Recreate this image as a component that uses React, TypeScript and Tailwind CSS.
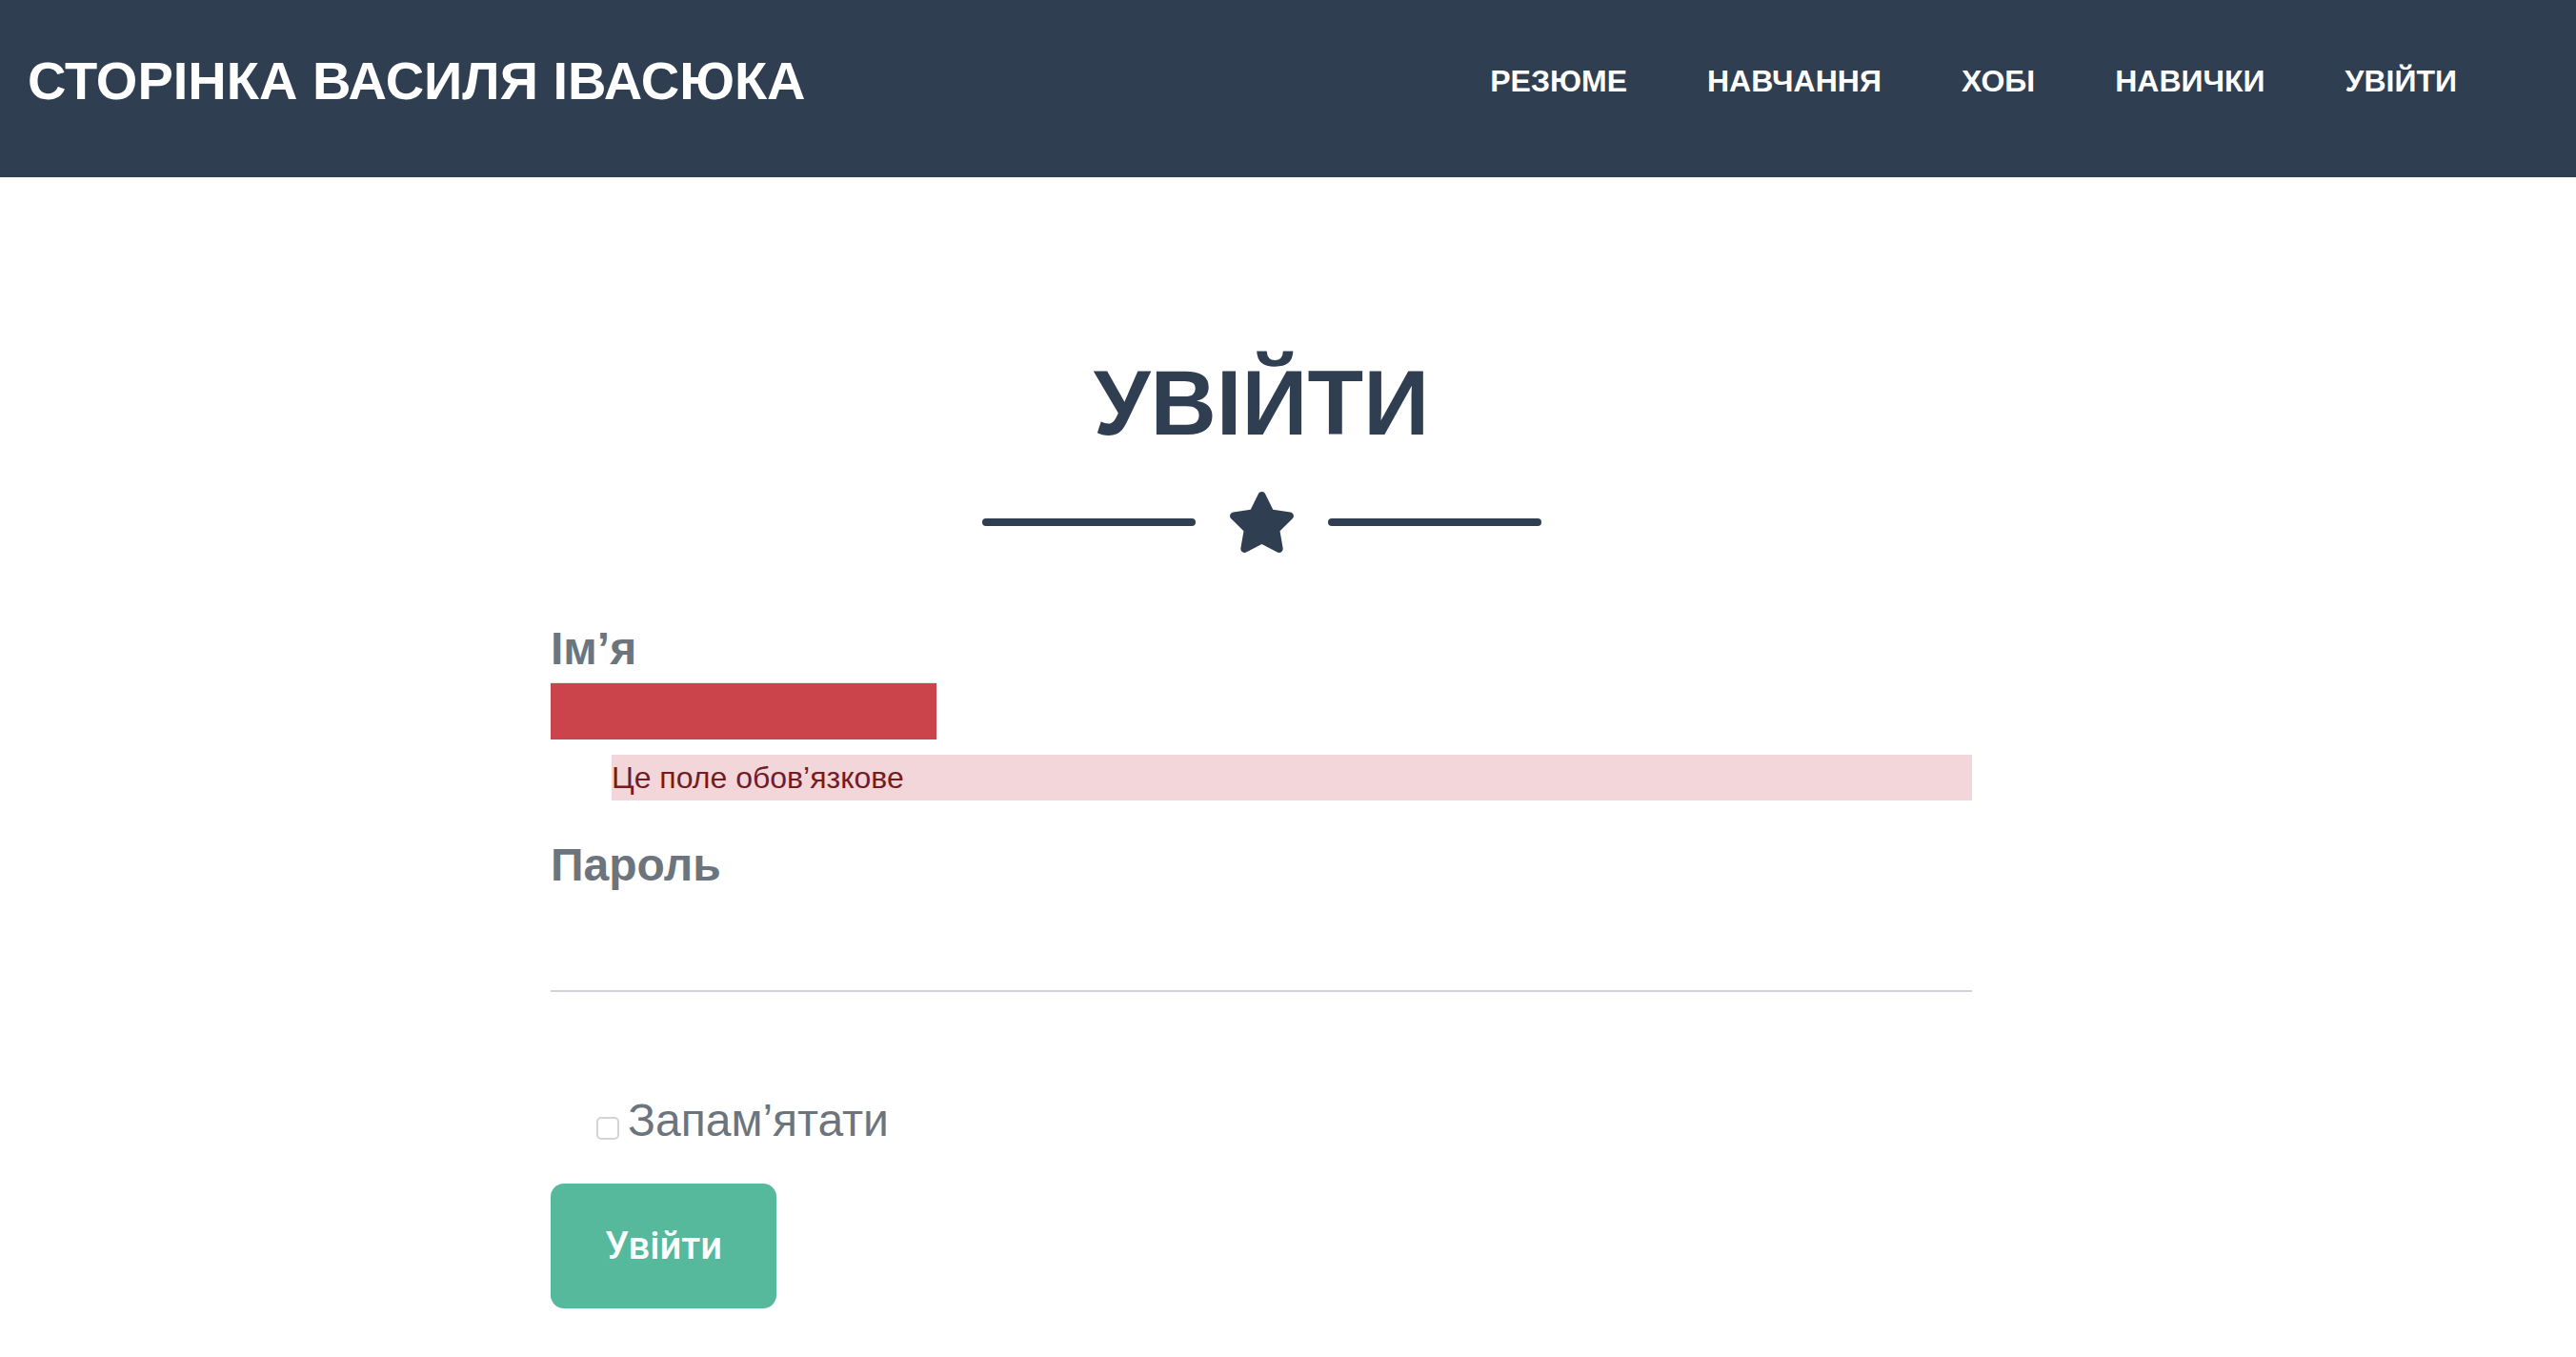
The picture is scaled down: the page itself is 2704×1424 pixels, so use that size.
import { useState } from 'react';

const navLinks = ['Резюме', 'Навчання', 'Хобі', 'Навички', 'Увійти'];

function Star() {
  return (
    <svg viewBox="20 0 536 512" className="h-[64px] w-[67px]" fill="#2f3e50">
      <path d="M259.3 17.8L194 150.2 47.9 171.5c-26.2 3.8-36.7 36.1-17.7 54.6l105.7 103-25 145.5c-4.5 26.3 23.2 46 46.4 33.7L288 439.6l130.7 68.7c23.2 12.2 50.9-7.4 46.4-33.7l-25-145.5 105.7-103c19-18.5 8.5-50.8-17.7-54.6L382 150.2 316.7 17.8c-11.7-23.6-45.6-23.9-57.4 0z" />
    </svg>
  );
}

export default function App() {
  const [name, setName] = useState('');
  const [password, setPassword] = useState('');
  const [remember, setRemember] = useState(false);

  return (
    <div className="min-h-screen bg-white font-['Liberation_Sans',Arial,sans-serif]">
      {/* navbar */}
      <header className="flex h-[186px] items-center justify-between bg-[#2f3e50] pb-[16px] pl-[29px] pr-[83px]">
        <a href="#" className="text-[56px] font-bold uppercase leading-[84px] text-white">
          Сторінка Василя Івасюка
        </a>
        <nav className="flex">
          {navLinks.map((link) => (
            <a key={link} href="#" className="px-[42px] text-[32px] font-bold uppercase leading-[48px] text-white">
              {link}
            </a>
          ))}
        </nav>
      </header>

      <main className="flex justify-center pr-[56px] pt-[179px] pb-[60px]">
        <div className="w-[1492px]">
          <h2 className="text-center text-[96px] font-bold uppercase leading-[116px] text-[#2f3e50]">
            Увійти
          </h2>

          <div className="mt-[35px] flex items-center justify-center gap-[36px]">
            <div className="h-[8px] w-[224px] rounded-full bg-[#2f3e50]" />
            <Star />
            <div className="h-[8px] w-[224px] rounded-full bg-[#2f3e50]" />
          </div>

          <form className="mt-[72px]" onSubmit={(e) => e.preventDefault()}>
            <label className="block text-[48px] font-bold leading-[58px] text-[#6c757d]">Ім’я</label>
            <input
              type="text"
              value={name}
              onChange={(e) => setName(e.target.value)}
              className="mt-[6px] block h-[60px] w-[405px] border-t border-[#e9e9e9] bg-[#cc444b] outline-none"
            />
            <p className="ml-[64px] mt-[16px] bg-[#f2d6d9] text-[32px] leading-[48px] text-[#721c24]">
              Це поле обов’язкове
            </p>

            <label className="mt-[39px] block text-[48px] font-bold leading-[58px] text-[#6c757d]">Пароль</label>
            <input
              type="password"
              value={password}
              onChange={(e) => setPassword(e.target.value)}
              className="block h-[104px] w-full border-b-2 border-[#ced4da] bg-transparent text-[48px] outline-none"
            />

            <div className="mt-[106px] flex items-start pl-[48px]">
              <input
                type="checkbox"
                checked={remember}
                onChange={(e) => setRemember(e.target.checked)}
                className="mt-[25px] h-[24px] w-[24px] appearance-none rounded-[5px] border-2 border-[#d4d4d4] bg-white"
              />
              <span className="ml-[9px] text-[48px] leading-[58px] text-[#6c757d]">Запам’ятати</span>
            </div>

            <button
              type="submit"
              className="mt-[37px] flex h-[131px] w-[237px] items-center justify-center rounded-[14px] bg-[#56b99c] font-['Roboto',sans-serif] text-[40px] font-medium text-white"
            >
              Увійти
            </button>
          </form>
        </div>
      </main>
    </div>
  );
}
